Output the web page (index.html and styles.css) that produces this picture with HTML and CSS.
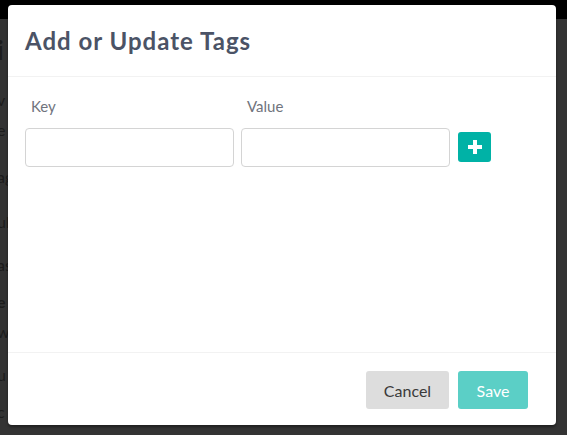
FILE: index.html
```html
<!DOCTYPE html>
<html>
<head>
<meta charset="utf-8">
<link rel="stylesheet" href="styles.css">
</head>
<body>
<div class="page">
  <div class="topbar"></div>
  <div class="behind">
    <div class="bg-line big gap-1">i</div>
    <div class="bg-line gap-50">v</div>
    <div class="bg-line gap-30">e</div>
    <div class="bg-line gap-50">ag</div>
    <div class="bg-line gap-45">ul</div>
    <div class="bg-line gap-43">as</div>
    <div class="bg-line bold gap-37">e</div>
    <div class="bg-line gap-30">w</div>
    <div class="bg-line gap-43">u</div>
    <div class="bg-line gap-37">c</div>
  </div>
</div>
<div class="modal">
  <div class="modal-header">
    <h2 class="title">Add or Update Tags</h2>
  </div>
  <div class="modal-body">
    <div class="tag-row">
      <div class="field key">
        <label class="label">Key</label>
        <input class="input" type="text">
      </div>
      <div class="field value">
        <label class="label">Value</label>
        <input class="input" type="text">
      </div>
      <button class="add-btn" aria-label="Add">
        <svg width="14" height="14" viewBox="0 0 14 14"><path d="M5 0h4v5h5v4H9v5H5V9H0V5h5z" fill="#fff"/></svg>
      </button>
    </div>
  </div>
  <div class="modal-footer">
    <button class="btn cancel">Cancel</button>
    <button class="btn save">Save</button>
  </div>
</div>
</body>
</html>
```
FILE: styles.css
```css
* { box-sizing: border-box; }
html, body { margin: 0; padding: 0; }
body {
  width: 567px;
  height: 435px;
  overflow: hidden;
  background: #333333;
  font-family: Lato, "Open Sans", sans-serif;
  position: relative;
}
.page { height: 100%; }
.topbar { height: 19px; background: #000; }
.behind {
  display: flex;
  flex-direction: column;
  color: #1c1c1c;
  font-size: 16px;
  margin-left: -3px;
}
.bg-line { height: 20px; line-height: 20px; }
.bg-line.big { font-size: 26px; font-weight: 700; height: 26px; line-height: 26px; }
.bg-line.bold { font-weight: 700; }
.gap-1 { margin-top: 18px; }
.gap-30 { margin-top: 10px; }
.gap-37 { margin-top: 17px; }
.gap-43 { margin-top: 23px; }
.gap-45 { margin-top: 25px; }
.gap-50 { margin-top: 27px; }

.modal {
  position: absolute;
  left: 8px;
  top: 5px;
  width: 548px;
  height: 420px;
  background: #fff;
  border-radius: 4px;
  display: flex;
  flex-direction: column;
  box-shadow: 0 2px 3px rgba(0,0,0,0.4);
}
.modal-header {
  height: 72px;
  border-bottom: 1px solid #f2f2f2;
  display: flex;
  align-items: center;
  padding-left: 17px;
}
.title {
  margin: 0;
  font-size: 24px;
  font-weight: 700;
  color: #4b5366;
  letter-spacing: 1px;
}
.modal-body {
  flex: 1;
  padding: 19px 17px 0 17px;
  border-bottom: 1px solid #f2f2f2;
}
.tag-row {
  display: flex;
  align-items: flex-end;
  gap: 7px;
}
.field { display: flex; flex-direction: column; }
.label {
  font-size: 15px;
  color: #70747d;
  padding-left: 6px;
  height: 32px;
  line-height: 20px;
}
.input {
  width: 209px;
  height: 39px;
  border: 1px solid #d4d4d4;
  border-radius: 4px;
  background: #fff;
  outline: none;
  margin: 0;
}
.add-btn {
  width: 33px;
  height: 30px;
  margin-left: 1px;
  margin-bottom: 5px;
  border: none;
  border-radius: 3px;
  background: #00b2a6;
  display: flex;
  align-items: center;
  justify-content: center;
  padding: 0;
}
.modal-footer {
  height: 72px;
  display: flex;
  justify-content: flex-end;
  align-items: center;
  gap: 9px;
  padding-right: 28px;
  padding-top: 2px;
}
.btn {
  height: 38px;
  border: none;
  border-radius: 3px;
  font-family: Lato, "Open Sans", sans-serif;
  font-size: 16px;
  padding: 0;
}
.cancel { width: 83px; background: #dddddd; color: #3a3a3a; }
.save { width: 70px; background: #5bcfc6; color: #fff; }
```
